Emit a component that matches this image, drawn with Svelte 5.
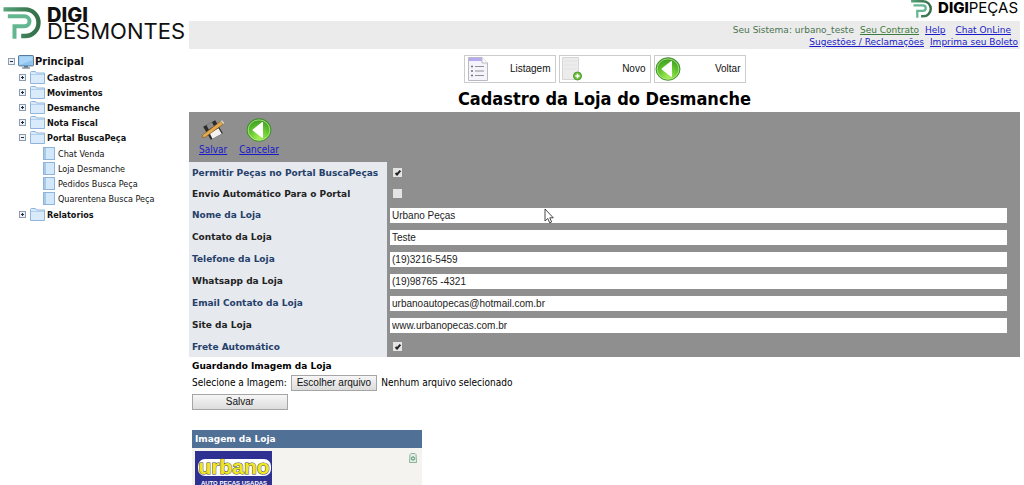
<script>
  const menu = [
    { label: 'Cadastros' },
    { label: 'Movimentos' },
    { label: 'Desmanche' },
    { label: 'Nota Fiscal' },
    {
      label: 'Portal BuscaPeça',
      items: ['Chat Venda', 'Loja Desmanche', 'Pedidos Busca Peça', 'Quarentena Busca Peça'],
    },
    { label: 'Relatorios' },
  ];

  let fields = $state([
    { id: 'permitir', label: 'Permitir Peças no Portal BuscaPeças', checked: true },
    { id: 'envio', label: 'Envio Automático Para o Portal', checked: false },
    { id: 'nome', label: 'Nome da Loja', value: 'Urbano Peças' },
    { id: 'contato', label: 'Contato da Loja', value: 'Teste' },
    { id: 'telefone', label: 'Telefone da Loja', value: '(19)3216-5459' },
    { id: 'whatsapp', label: 'Whatsapp da Loja', value: '(19)98765 -4321' },
    { id: 'email', label: 'Email Contato da Loja', value: 'urbanoautopecas@hotmail.com.br' },
    { id: 'site', label: 'Site da Loja', value: 'www.urbanopecas.com.br' },
    { id: 'frete', label: 'Frete Automático', checked: true },
  ]);
</script>

{#snippet mark(id)}
  <svg class="mark" viewBox="8 20 113 96" aria-hidden="true">
    <defs>
      <linearGradient id="{id}-d" x1="0" x2="1" y1="0" y2="0">
        <stop offset="0" stop-color="#57a57c" />
        <stop offset="0.6" stop-color="#3f7f58" />
        <stop offset="1" stop-color="#33704a" />
      </linearGradient>
    </defs>
    <path d="M9 27H74A40 40 0 0 1 74 107H62" fill="none" stroke="url(#{id}-d)" stroke-width="13" />
    <path d="M22 48H72A15 15 0 0 1 72 78H42V115" fill="none" stroke="#62b791" stroke-width="12" />
  </svg>
{/snippet}

{#snippet toggle(open)}
  <svg class="toggle" viewBox="0 0 7 7" aria-hidden="true">
    <rect x="0.5" y="0.5" width="6" height="6" fill="#eef1f5" stroke="#8c9bb0" />
    <path d={open ? 'M2 3.5H5' : 'M2 3.5H5M3.5 2V5'} stroke="#222c3c" stroke-width="1" />
  </svg>
{/snippet}

{#snippet back(id)}
  <svg class="back" viewBox="0 0 26 24" aria-hidden="true">
    <defs>
      <radialGradient id={id} cx="0.5" cy="0.85" r="0.8">
        <stop offset="0" stop-color="#a5ee55" />
        <stop offset="0.6" stop-color="#5cc02c" />
        <stop offset="1" stop-color="#3f9c25" />
      </radialGradient>
    </defs>
    <ellipse cx="13" cy="12" rx="12" ry="11.3" fill="url(#{id})" stroke="#3d8a2c" stroke-width="0.9" />
    <ellipse cx="13" cy="12" rx="10.8" ry="10.1" fill="none" stroke="#b5ea8d" stroke-width="0.8" />
    <path d="M16.3 4.8V19.2L7.2 12Z" fill="#fff" stroke="#fff" stroke-width="1.4" stroke-linejoin="round" />
  </svg>
{/snippet}

<div class="page">
  <aside>
    <a class="brand" href="#inicio">
      {@render mark('main')}
      <span class="name"><b>DIGI</b><span>DESMONTES</span></span>
    </a>
    <nav aria-label="Menu">
      <a class="node root" href="#principal">
        {@render toggle(true)}
        <svg class="pc" viewBox="0 0 16 14" aria-hidden="true">
          <rect x="0.6" y="0.6" width="14.8" height="10.3" rx="0.6" fill="#a9d6f8" stroke="#4c7195" />
          <path d="M1.5 10L14.5 5V10Z" fill="#8cc3ef" />
          <path d="M6 11H10V12.5H6Z" fill="#60768c" />
          <path d="M4 13H12" stroke="#4b5f73" />
        </svg>
        Principal
      </a>
      <ul>
        {#each menu as m}
          <li>
            <a class="node folder-node" href="#menu">
              {@render toggle(!!m.items)}
              <svg class="folder" viewBox="0 0 15 13" aria-hidden="true">
                <path d="M0.5 12.5V1.5Q0.5 0.5 1.5 0.5H5.5L6.5 2H14.5V12.5Z" fill="#d9ebfb" stroke="#90b4da" />
                <path d="M1 3.5H14" stroke="#b3d0ee" />
              </svg>
              {m.label}
            </a>
            {#if m.items}
              <ul class="sub">
                {#each m.items as item}
                  <li>
                    <a class="node leaf" href="#item">
                      <svg class="doc" viewBox="0 0 12 13" aria-hidden="true">
                        <rect x="0.5" y="0.5" width="11" height="12" fill="#d3e8fb" stroke="#8fb4dc" />
                        <path d="M2 1V12" stroke="#7ea8d6" />
                      </svg>
                      {item}
                    </a>
                  </li>
                {/each}
              </ul>
            {/if}
          </li>
        {/each}
      </ul>
    </nav>
  </aside>

  <main>
    <header>
      <div class="partner">{@render mark('partner')}<span><b>DIGI</b>PEÇAS</span></div>
      <div class="account">
        <div class="line first">
          <span>Seu Sistema: urbano_teste</span>
          <a class="green" href="#contrato">Seu Contrato</a>
          <a href="#help">Help</a>
          <a class="chat" href="#chat">Chat OnLine</a>
        </div>
        <div class="line">
          <a href="#sugestoes">Sugestões / Reclamações</a>
          <a href="#boleto">Imprima seu Boleto</a>
        </div>
      </div>
    </header>

    <div class="actions">
      <button type="button">
        <svg class="sheet" viewBox="0 0 22 24" aria-hidden="true">
          <path d="M1.5 0.5H15L20.5 6V23.5H1.5Z" fill="#f4f4fa" stroke="#b9b9c6" />
          <path d="M2 1H15V4H2Z" fill="#b7abf0" />
          <path d="M15 0.5V6H20.5" fill="#fff" stroke="#b9b9c6" />
          <path d="M8 9.5H17M8 14H17M8 18.5H17" stroke="#8f8f9c" stroke-width="1.2" />
          <path d="M4 9.5H6M4 14H6M4 18.5H6" stroke="#6c6c7c" stroke-width="1.6" />
        </svg>
        Listagem
      </button>
      <button type="button" class="flush">
        <svg class="sheet" viewBox="0 0 22 24" aria-hidden="true">
          <path d="M2.5 0.5H18.5V22.5H2.5Z" fill="#ececec" stroke="#d6d6d6" />
          <path d="M4 4H17M4 8H17M4 12H17" stroke="#e2e2e2" />
          <circle cx="17.5" cy="19" r="4" fill="#6cbf3c" stroke="#4b9a2c" />
          <path d="M15.300 19H19.700M17.500 16.800V21.200" stroke="#fff" stroke-width="1.5" />
        </svg>
        Novo
      </button>
      <button type="button" class="flush">{@render back('voltar')}Voltar</button>
    </div>

    <h1>Cadastro da Loja do Desmanche</h1>

    <form class="shop" onsubmit={(e) => e.preventDefault()}>
      <div class="tools">
        <a href="#salvar">
          <svg class="disk" viewBox="0 0 22 22" aria-hidden="true">
            <path d="M2 8L13 2L20 14L9 20Z" fill="#2b2b2b" />
            <path d="M5 6.5L10 3.7L12 7.5L7 10.5Z" fill="#8b8b8b" />
            <path d="M8 14L16 9.5L19 14.5L10.5 19Z" fill="#f2f2f2" />
            <path d="M1.5 15.5L18 3L20.5 5.5L4 17.5L1 17.8Z" fill="#e3a94e" stroke="#8a5c22" stroke-width="0.6" />
            <path d="M18 3L19.3 2L21.5 4.5L20.5 5.5Z" fill="#d9d2c4" />
          </svg>
          Salvar
        </a>
        <a href="#cancelar">{@render back('cancelar')}Cancelar</a>
      </div>
      <table>
        <tbody>
          {#each fields as f, i}
            <tr class:alt={i % 2 === 1} class:short={!('value' in f)}>
              <th scope="row"><label for={f.id}>{f.label}</label></th>
              <td>
                {#if 'value' in f}
                  <input class="text" id={f.id} type="text" bind:value={f.value} />
                {:else}
                  <input class="check" id={f.id} type="checkbox" bind:checked={f.checked} />
                {/if}
              </td>
            </tr>
          {/each}
        </tbody>
      </table>
    </form>

    <form class="upload" onsubmit={(e) => e.preventDefault()}>
      <h2>Guardando Imagem da Loja</h2>
      <div class="pick">
        <span>Selecione a Imagem:</span>
        <input class="file" id="arquivo" type="file" aria-label="Selecione a Imagem" />
        <label class="btn" for="arquivo">Escolher arquivo</label>
        <span>Nenhum arquivo selecionado</span>
      </div>
      <button class="btn save" type="submit">Salvar</button>
    </form>

    <table class="images">
      <thead><tr><th colspan="2">Imagem da Loja</th></tr></thead>
      <tbody>
        <tr>
          <td>
            <svg class="shop-logo" viewBox="0 0 77 42" role="img" aria-label="Urbano Auto Peças Usadas">
              <rect width="77" height="42" fill="#2f3192" />
              <rect x="3" y="8" width="73" height="17" rx="7" fill="#fff" />
              <text class="word halo" x="39" y="23" text-anchor="middle" aria-hidden="true">urbano</text>
              <text class="tag" x="39" y="34" text-anchor="middle">AUTO PECAS USADAS</text>
            </svg>
          </td>
          <td class="del">
            <button type="button" aria-label="Excluir">
              <svg viewBox="0 0 8 10" aria-hidden="true">
                <path d="M1 1.5L2 0.5H6L7 1.5L7.5 9.5H0.5Z" fill="#e3efe6" stroke="#8fb09a" />
                <circle cx="4" cy="5.5" r="1.6" fill="none" stroke="#3f8a5c" />
              </svg>
            </button>
          </td>
        </tr>
      </tbody>
    </table>
  </main>

  <svg class="pointer" viewBox="0 0 10 16" aria-hidden="true">
    <path d="M1 1V13L3.8 10.5L5.7 14.8L7.6 14L5.8 9.8H9.3Z" fill="#fff" stroke="#333" stroke-width="0.9" />
  </svg>
</div>

<style>
  :global(body) { background: #fff; }
  .page {
    position: relative;
    display: grid;
    grid-template-columns: 189px 1fr;
    height: 100vh;
    overflow: hidden;
    font: 10px/12px 'DejaVu Sans Condensed', 'DejaVu Sans', sans-serif;
    font-stretch: condensed;
    color: #000;
  }
  ul { list-style: none; margin: 0; padding: 0; }
  svg { display: block; flex: none; }
  a { color: #1a1ac8; }

  .brand {
    display: flex;
    gap: 6px;
    padding: 7px 0 0 3px;
    color: #111;
    text-decoration: none;
    font: 22px/16px Inter, sans-serif;
  }
  .brand .mark { width: 38px; height: 32px; }
  .name { display: flex; flex-direction: column; }
  .name b { font-size: 20px; font-weight: 800; }

  nav { padding: 14px 0 0 8px; }
  .node {
    display: flex;
    align-items: center;
    height: 15px;
    color: #111;
    font-size: 9px;
    text-decoration: none;
    white-space: nowrap;
  }
  .toggle { width: 7px; height: 7px; }
  .root { gap: 1px; height: 17px; font-size: 11px; font-weight: bold; }
  .root .toggle { margin-right: 2px; }
  .pc { width: 16px; height: 14px; }
  .folder-node { gap: 2px; padding-left: 11px; font-weight: bold; }
  .folder-node .toggle { margin-right: 2px; }
  .folder { width: 15px; height: 13px; }
  .sub { padding: 1px 0; }
  .leaf { gap: 3px; padding-left: 35px; }
  .doc { width: 12px; height: 13px; }

  main { min-width: 0; padding-right: 4px; }
  header { display: flex; flex-direction: column; }
  .partner {
    display: flex;
    justify-content: flex-end;
    gap: 4px;
    height: 21px;
    padding-right: 2px;
    font: 15px/15px Inter, sans-serif;
  }
  .partner b { font-weight: 800; }
  .partner .mark { width: 25px; height: 18px; }
  .account {
    padding: 3px 2px 1px;
    background: #ebebeb;
    color: #4a7350;
    font: 9px/12px 'DejaVu Sans', sans-serif;
  }
  .line { display: flex; justify-content: flex-end; gap: 6px; }
  .first { padding-right: 7px; }
  .green { color: #3d7a3d; }
  .chat { margin-left: 4px; }

  .actions { display: flex; justify-content: center; gap: 3px; padding-top: 6px; }
  .actions button {
    display: flex;
    align-items: center;
    justify-content: space-between;
    width: 92px;
    height: 28px;
    padding: 0 4px 0 2px;
    border: 1px solid #ccc;
    background: #fff;
    font: 10px/12px 'Liberation Sans', sans-serif;
    color: #111;
  }
  .actions .flush { padding-left: 0; }
  .sheet { width: 22px; height: 24px; }
  .back { width: 26px; height: 24px; }

  h1 { margin: 6px 0 3px; font-size: 18px; line-height: 20px; text-align: center; }

  .shop { background: #8f8f8f; }
  .tools { display: flex; gap: 12px; padding: 6px 10px; }
  .tools a { display: flex; flex-direction: column; align-items: center; gap: 2px; }
  .disk { width: 24px; height: 24px; }
  table { border-collapse: collapse; }
  .shop table { width: 100%; }
  .shop th, .shop td { height: 22px; padding: 0; }
  .shop .short th, .shop .short td { height: 21px; }
  .shop th {
    width: 195px;
    padding-left: 3px;
    background: #e6e9ee;
    color: #25406a;
    font: bold 9px/12px 'DejaVu Sans', sans-serif;
    text-align: left;
    white-space: nowrap;
  }
  .shop .alt th { color: #222; }
  .shop td { padding: 0 13px 0 3px; }
  .text {
    display: block;
    box-sizing: border-box;
    width: 100%;
    height: 15px;
    padding: 0 2px;
    border: 0;
    background: #fff;
    font: 10px/15px 'Liberation Sans', sans-serif;
    color: #222;
  }
  .check {
    appearance: none;
    display: grid;
    width: 9px;
    height: 9px;
    margin: 0 3px;
    background: #e4e4e4;
  }
  .check:checked::before {
    content: '';
    width: 6px;
    height: 3px;
    margin: 1px;
    border: solid #222;
    border-width: 0 0 2px 2px;
    box-sizing: border-box;
    transform: rotate(-48deg);
    place-self: center;
  }

  .upload { padding: 3px 3px 0; }
  h2 { margin: 0 0 3px; font: bold 9px/12px 'DejaVu Sans', sans-serif; }
  .pick { display: flex; align-items: center; gap: 4px; }
  .file { position: absolute; width: 1px; height: 1px; opacity: 0; }
  .btn {
    box-sizing: border-box;
    height: 16px;
    padding: 0 5px;
    border: 1px solid #a5a5a5;
    background: linear-gradient(#f6f6f6, #dcdcdc);
    font: 10px/14px 'Liberation Sans', sans-serif;
    color: #111;
  }
  .save { display: block; width: 96px; margin-top: 3px; }

  .images { width: 230px; margin: 20px 3px 0; background: #f4f3ef; }
  .images th {
    height: 18px;
    padding: 0 3px;
    background: #517095;
    color: #fff;
    font: bold 9px/12px 'DejaVu Sans', sans-serif;
    text-align: left;
  }
  .images td { padding: 3px; vertical-align: top; }
  .shop-logo { width: 77px; height: 42px; }
  .word { font: bold 21px 'Liberation Sans', sans-serif; fill: #f1e61f; stroke: #4b4a55; stroke-width: 1px; paint-order: stroke; }
  .tag { font: bold 6px 'Liberation Sans', sans-serif; fill: #fff; }
  .images .del { width: 8px; padding-right: 5px; }
  .del button { display: block; padding: 2px 0 0; border: 0; background: none; }
  .del svg { width: 8px; height: 10px; }

  .pointer { position: absolute; left: 544px; top: 208px; width: 10px; height: 16px; }
</style>
